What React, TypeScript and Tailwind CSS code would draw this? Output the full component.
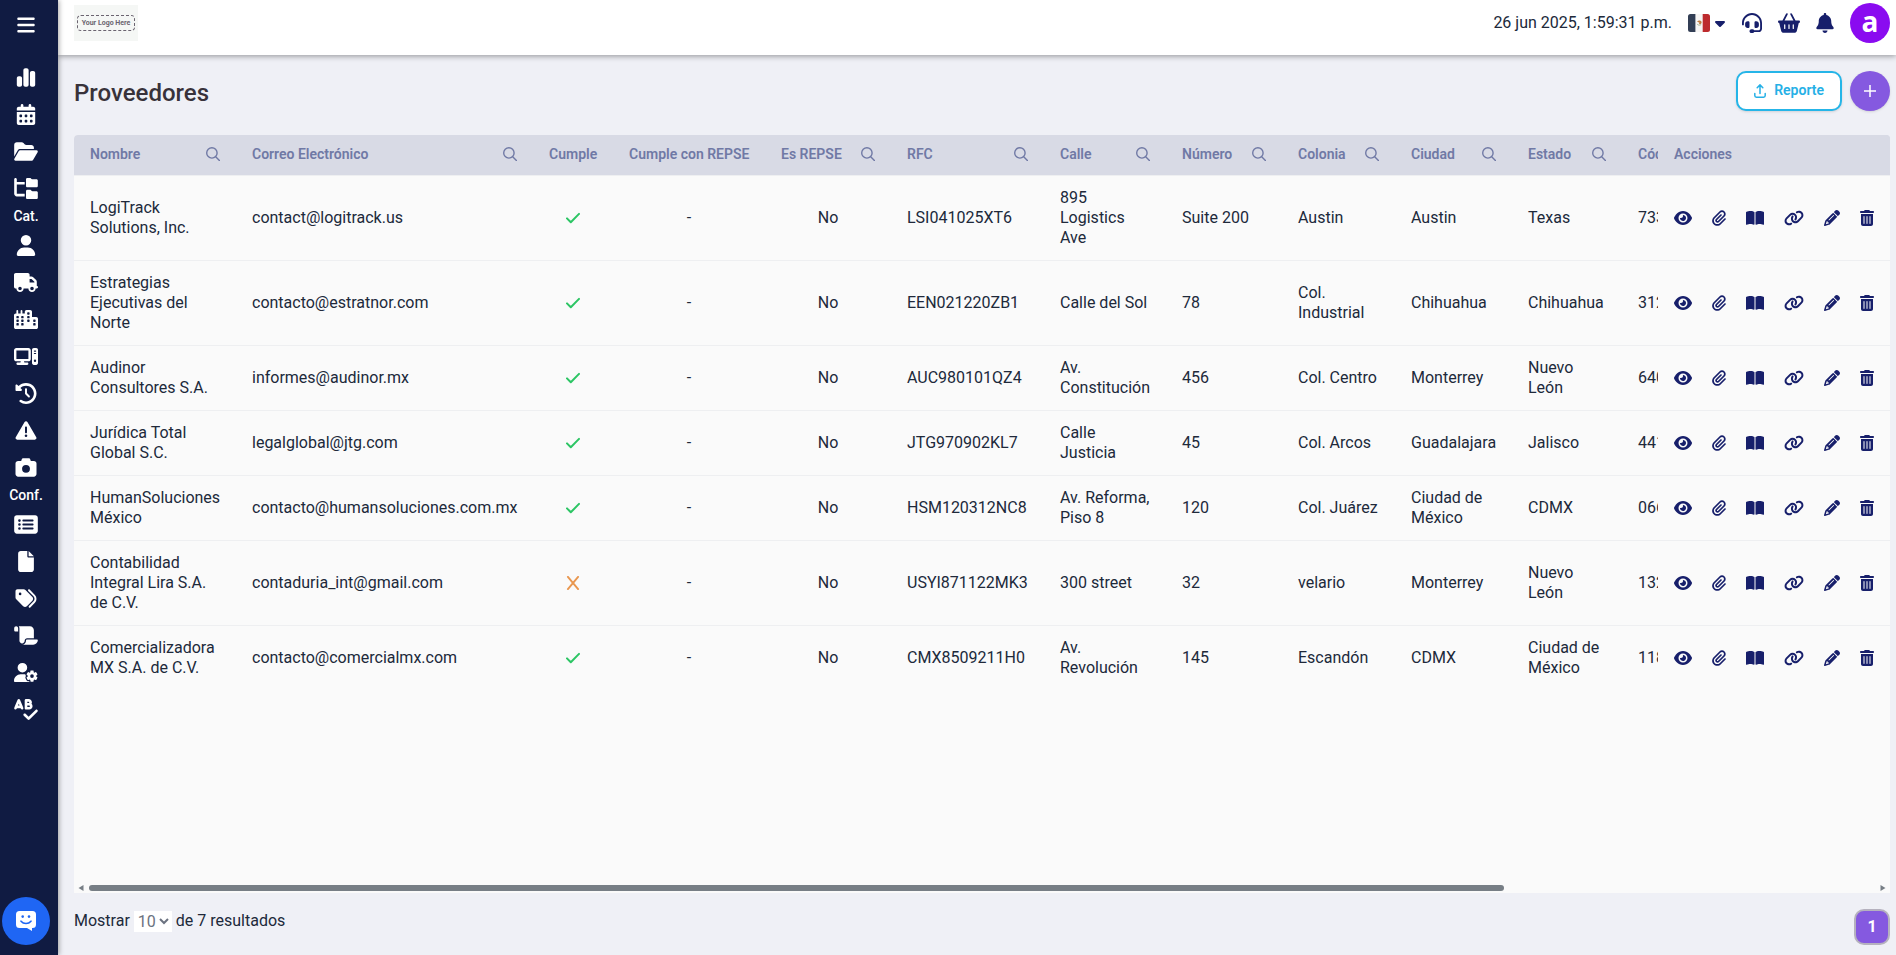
import React, { useState } from "react";
import clsx from "clsx";
import {
  FaBars,
  FaBasketShopping,
  FaBell,
  FaBookOpen,
  FaCalendarDays,
  FaCamera,
  FaCaretDown,
  FaChartSimple,
  FaCity,
  FaClockRotateLeft,
  FaComputer,
  FaEye,
  FaFile,
  FaFolderOpen,
  FaFolderTree,
  FaHeadset,
  FaLink,
  FaPaperclip,
  FaPencil,
  FaRectangleList,
  FaScroll,
  FaSpellCheck,
  FaTags,
  FaTrashCan,
  FaTriangleExclamation,
  FaTruck,
  FaUser,
  FaUserGear,
} from "react-icons/fa6";

const menuGroups = [
  {
    title: "",
    items: [
      { name: "Indicadores", icon: FaChartSimple },
      { name: "Calendario", icon: FaCalendarDays },
      { name: "Documentos", icon: FaFolderOpen },
      { name: "Estructura", icon: FaFolderTree },
    ],
  },
  {
    title: "Cat.",
    items: [
      { name: "Clientes", icon: FaUser },
      { name: "Proveedores", icon: FaTruck },
      { name: "Sucursales", icon: FaCity },
      { name: "Equipos", icon: FaComputer },
      { name: "Historial", icon: FaClockRotateLeft },
      { name: "Alertas", icon: FaTriangleExclamation },
      { name: "Fotos", icon: FaCamera },
    ],
  },
  {
    title: "Conf.",
    items: [
      { name: "Listas", icon: FaRectangleList },
      { name: "Archivos", icon: FaFile },
      { name: "Etiquetas", icon: FaTags },
      { name: "Plantillas", icon: FaScroll },
      { name: "Usuarios", icon: FaUserGear },
      { name: "Textos", icon: FaSpellCheck },
    ],
  },
];

const columns = [
  { key: "nombre", title: "Nombre", search: true, width: "w-[162px]" },
  { key: "correo", title: "Correo Electrónico", search: true, width: "w-[297px]" },
  { key: "cumple", title: "Cumple", search: false, width: "w-[80px]", center: true },
  { key: "repse", title: "Cumple con REPSE", search: false, width: "w-[152px]", center: true },
  { key: "esRepse", title: "Es REPSE", search: true, width: "w-[126px]", center: true },
  { key: "rfc", title: "RFC", search: true, width: "w-[153px]" },
  { key: "calle", title: "Calle", search: true, width: "w-[122px]" },
  { key: "numero", title: "Número", search: true, width: "w-[116px]" },
  { key: "colonia", title: "Colonia", search: true, width: "w-[113px]" },
  { key: "ciudad", title: "Ciudad", search: true, width: "w-[117px]" },
  { key: "estado", title: "Estado", search: true, width: "w-[110px]" },
  { key: "cp", title: "Código Postal", search: true, width: "w-[518px]" },
];

const makeRow = (
  nombre: string,
  correo: string,
  cumple: boolean,
  rfc: string,
  calle: string,
  numero: string,
  colonia: string,
  ciudad: string,
  estado: string,
  cp: string
) => ({ nombre, correo, cumple, repse: "-", esRepse: "No", rfc, calle, numero, colonia, ciudad, estado, cp });

const providers = [
  makeRow("LogiTrack Solutions, Inc.", "contact@logitrack.us", true, "LSI041025XT6", "895 Logistics Ave", "Suite 200", "Austin", "Austin", "Texas", "73301"),
  makeRow("Estrategias Ejecutivas del Norte", "contacto@estratnor.com", true, "EEN021220ZB1", "Calle del Sol", "78", "Col. Industrial", "Chihuahua", "Chihuahua", "31200"),
  makeRow("Audinor Consultores S.A.", "informes@audinor.mx", true, "AUC980101QZ4", "Av. Constitución", "456", "Col. Centro", "Monterrey", "Nuevo León", "64000"),
  makeRow("Jurídica Total Global S.C.", "legalglobal@jtg.com", true, "JTG970902KL7", "Calle Justicia", "45", "Col. Arcos", "Guadalajara", "Jalisco", "44100"),
  makeRow("HumanSoluciones México", "contacto@humansoluciones.com.mx", true, "HSM120312NC8", "Av. Reforma, Piso 8", "120", "Col. Juárez", "Ciudad de México", "CDMX", "06600"),
  makeRow("Contabilidad Integral Lira S.A. de C.V.", "contaduria_int@gmail.com", false, "USYI871122MK3", "300 street", "32", "velario", "Monterrey", "Nuevo León", "13200"),
  makeRow("Comercializadora MX S.A. de C.V.", "contacto@comercialmx.com", true, "CMX8509211H0", "Av. Revolución", "145", "Escandón", "CDMX", "Ciudad de México", "11800"),
];

const actions = [
  { name: "Ver", icon: FaEye, width: "w-[18px]" },
  { name: "Adjuntos", icon: FaPaperclip, width: "w-3.5" },
  { name: "Bitácora", icon: FaBookOpen, width: "w-[18px]" },
  { name: "Vincular", icon: FaLink, width: "w-5" },
  { name: "Editar", icon: FaPencil, width: "w-4" },
  { name: "Eliminar", icon: FaTrashCan, width: "w-3.5" },
];

const SearchIcon = () => (
  <svg viewBox="0 0 14 14" className="size-3.5" fill="none" stroke="currentColor" strokeWidth="1.4" strokeLinecap="round">
    <circle cx="5.9" cy="5.9" r="5.2" />
    <path d="M9.7 9.7 13.4 13.4" />
  </svg>
);

const CheckIcon = () => (
  <svg viewBox="0 0 14 14" className="mx-auto size-3.5 text-[#2cc564]" fill="none" stroke="currentColor" strokeWidth="2" strokeLinecap="round" strokeLinejoin="round">
    <path d="M1 7.4 4.8 11.3 13 2.9" />
  </svg>
);

const CrossIcon = () => (
  <svg viewBox="0 0 14 14" className="mx-auto size-3.5 text-[#e9974f]" fill="none" stroke="currentColor" strokeWidth="1.9" strokeLinecap="round">
    <path d="M1.9.9 12.1 13.1M12.1.9 1.9 13.1" />
  </svg>
);

const UploadIcon = () => (
  <svg viewBox="0 0 12 14" className="h-3.5 w-3" fill="none" stroke="currentColor" strokeWidth="1.5" strokeLinecap="round" strokeLinejoin="round">
    <path d="M6 9.6V1M3.2 3.7 6 .9l2.800 2.800M.8 9.400v2.200c0 .9.7 1.600 1.600 1.600h7.200c.9 0 1.600-.7 1.600-1.600V9.400" />
  </svg>
);

const MexicoFlag = () => (
  <svg viewBox="0 0 22 18" className="h-[18px] w-[22px]">
    <rect x="0" y="0" width="22" height="18" rx="2.5" fill="#f7f5f4" />
    <path d="M2.5 0H7.4V18H2.5A2.5 2.5 0 0 1 0 15.5V2.5A2.5 2.5 0 0 1 2.5 0Z" fill="#323e55" />
    <path d="M14.7 0h4.8A2.5 2.5 0 0 1 22 2.5v13a2.5 2.5 0 0 1-2.5 2.5h-4.8Z" fill="#bd2a2d" />
    <path d="M9 7.6c1-.9 2.3-1.5 3.5-.9 1.1.5 1.400 1.600.9 2.500-.5.8-1.500 1.200-2.500.9l.6-1.300Z" fill="#c07a3c" />
    <path d="M9.200 10.200c1 1.200 2.900 1.300 4 .2" stroke="#8a9a6a" strokeWidth=".7" fill="none" />
  </svg>
);

const ChatIcon = () => (
  <svg viewBox="0 0 20 20" className="size-5">
    <path d="M3.500 0h13A3.500 3.500 0 0 1 20 3.500v10a3.500 3.500 0 0 1-3.500 3.500H16v3l-5-3H3.500A3.500 3.500 0 0 1 0 13.500v-10A3.500 3.500 0 0 1 3.500 0Z" fill="#fff" />
    <circle cx="6.700" cy="5.600" r="1.300" fill="#1f66f4" />
    <circle cx="13" cy="5.600" r="1.300" fill="#1f66f4" />
    <path d="M5 10.200c2.600 3 7.400 3 10 0" stroke="#1f66f4" strokeWidth="1.600" strokeLinecap="round" fill="none" />
  </svg>
);

const Sidebar = () => (
  <aside className="relative z-20 flex w-[58px] shrink-0 flex-col bg-[#101b42] pr-1.5 text-white shadow-[1px_0_5px_rgba(0,0,0,0.35)]">
    <button aria-label="Menú" className="mx-auto mt-[15px] mb-6">
      <FaBars className="size-5" />
    </button>
    <nav>
      {menuGroups.map((group, idx) => (
        <div key={idx}>
          {group.title && (
            <p className="pb-0.5 text-center text-sm/[18px] font-medium">{group.title}</p>
          )}
          {group.items.map((item) => (
            <a key={item.name} href="#" aria-label={item.name} className="flex h-[37px] items-center justify-center">
              <item.icon className="h-[21px] w-6" />
            </a>
          ))}
        </div>
      ))}
    </nav>
    <button aria-label="Chat" className="mx-auto mt-auto mb-2.5 flex size-12 items-center justify-center rounded-full bg-[#1f66f4]">
      <ChatIcon />
    </button>
  </aside>
);

const TopBar = () => (
  <header className="relative z-10 flex h-[55px] shrink-0 items-start justify-between bg-white pr-1.5 pl-4 shadow-[0_1px_6px_rgba(0,0,0,0.4)]">
    <div className="mt-[5px] flex h-9 w-16 items-center justify-center bg-[#f5f7f5]">
      <span className="rounded-sm border border-dashed border-[#6b6470] px-1 text-[7px]/[14px] font-bold whitespace-nowrap text-[#6b6470]">
        Your Logo Here
      </span>
    </div>
    <div className="mt-[3px] flex h-10 items-center gap-4 text-[#171f6b]">
      <time className="text-base text-[#20293a]">26 jun 2025, 1:59:31 p.m.</time>
      <button aria-label="Idioma" className="flex items-center gap-1">
        <MexicoFlag />
        <FaCaretDown className="h-4 w-3" />
      </button>
      <button aria-label="Soporte">
        <FaHeadset className="size-5" />
      </button>
      <button aria-label="Carrito">
        <FaBasketShopping className="h-5 w-[22px]" />
      </button>
      <button aria-label="Notificaciones">
        <FaBell className="h-5 w-[18px]" />
      </button>
      <button aria-label="Cuenta" className="flex size-10 items-center justify-center rounded-full bg-[#8a0bf0] font-['Open_Sans',sans-serif] text-[28px]/[28px] font-bold text-white">
        <span className="pb-1">a</span>
      </button>
    </div>
  </header>
);

const ProvidersTable = () => (
  <div className="flex min-h-0 flex-1 flex-col overflow-hidden rounded-t bg-[#fafafa]">
    <div className="min-h-0 flex-1 overflow-auto [scrollbar-width:none]">
      <table className="w-[2298px] table-fixed border-separate border-spacing-0 text-left">
        <thead>
          <tr className="text-sm/5 text-[#7079a5]">
            {columns.map((col) => (
              <th key={col.key} className={clsx("h-[41px] border-b border-[#eeeff1] bg-[#d8dae5] px-4 pt-0 pb-0.5 font-semibold", col.width)}>
                <div className="flex items-center justify-between whitespace-nowrap">
                  {col.title}
                  {col.search && (
                    <button aria-label={`Buscar ${col.title}`}>
                      <SearchIcon />
                    </button>
                  )}
                </div>
              </th>
            ))}
            <th className="sticky right-0 h-[41px] w-[232px] border-b border-[#eeeff1] bg-[#d8dae5] px-4 pt-0 pb-0.5 font-semibold">Acciones</th>
          </tr>
        </thead>
        <tbody>
          {providers.map((row, idx) => (
            <tr key={row.rfc} className="text-base/5 text-[#20293a]">
              {columns.map((col) => (
                <td
                  key={col.key}
                  className={clsx(
                    "px-4 py-3",
                    col.center && "text-center",
                    idx < providers.length - 1 && "border-b border-[#eeeff1]"
                  )}
                >
                  {col.key === "cumple" ? (
                    row.cumple ? <CheckIcon /> : <CrossIcon />
                  ) : (
                    row[col.key as keyof typeof row]
                  )}
                </td>
              ))}
              <td
                className={clsx(
                  "sticky right-0 bg-[#fafafa] px-4 py-3",
                  idx < providers.length - 1 && "border-b border-[#eeeff1]"
                )}
              >
                <div className="flex items-center gap-5 text-[#171f6b]">
                  {actions.map((action) => (
                    <button key={action.name} aria-label={action.name}>
                      <action.icon className={clsx("h-4", action.width)} />
                    </button>
                  ))}
                </div>
              </td>
            </tr>
          ))}
        </tbody>
      </table>
    </div>
    {/* horizontal scroll */}
    <div className="flex h-2.5 items-center px-[3px] text-[#777e85]">
      <svg viewBox="0 0 6 6" className="mr-1 h-1.5 w-2" fill="currentColor">
        <path d="M5.500 0v6L.5 3Z" />
      </svg>
      <div className="flex-1">
        <div className="h-1.5 w-[79.2%] rounded-full bg-[#777e85]" />
      </div>
      <svg viewBox="0 0 6 6" className="ml-1 h-1.5 w-2" fill="currentColor">
        <path d="M.5 0v6l5-3Z" />
      </svg>
    </div>
  </div>
);

const App = () => {
  const [pageSize, setPageSize] = useState("10");

  return (
    <div className="flex h-screen bg-[#eff0f6] font-[Roboto,sans-serif] text-[#20293a]">
      <Sidebar />
      <div className="flex min-w-0 flex-1 flex-col">
        <TopBar />
        <main className="flex min-h-0 flex-1 flex-col pt-4 pr-1.5 pl-4">
          <div className="mb-6 flex h-10 items-center justify-between">
            <h1 className="pt-1 text-2xl font-medium text-[#38323a]">Proveedores</h1>
            <div className="flex gap-2">
              <button className="flex h-10 items-center gap-2 rounded-[10px] border-2 border-[#25b5e8] bg-white px-4 text-sm font-semibold text-[#25b0e6] shadow-sm">
                <UploadIcon />
                <span className="pb-0.5">Reporte</span>
              </button>
              <button aria-label="Agregar" className="flex size-10 items-center justify-center rounded-full bg-[#8559e0] text-white shadow-sm">
                <svg viewBox="0 0 12 12" className="size-3" stroke="currentColor" strokeWidth="1.500">
                  <path d="M6 0v12M0 6h12" />
                </svg>
              </button>
            </div>
          </div>
          <ProvidersTable />
          <footer className="flex h-[62px] shrink-0 items-start justify-between pt-4">
            <div className="flex items-center gap-1 text-base">
              <label htmlFor="pageSize">Mostrar</label>
              <select
                id="pageSize"
                value={pageSize}
                onChange={(e) => setPageSize(e.target.value)}
                className="h-[21px] bg-white text-base/5 text-[#6b7280]"
              >
                <option>10</option>
                <option>25</option>
                <option>50</option>
              </select>
              <span>de 7 resultados</span>
            </div>
            <button className="size-9 rounded-[10px] border-2 border-[#b5b1be] bg-[#8559e0] text-base/5 font-bold text-white">
              1
            </button>
          </footer>
        </main>
      </div>
    </div>
  );
};

export default App;
